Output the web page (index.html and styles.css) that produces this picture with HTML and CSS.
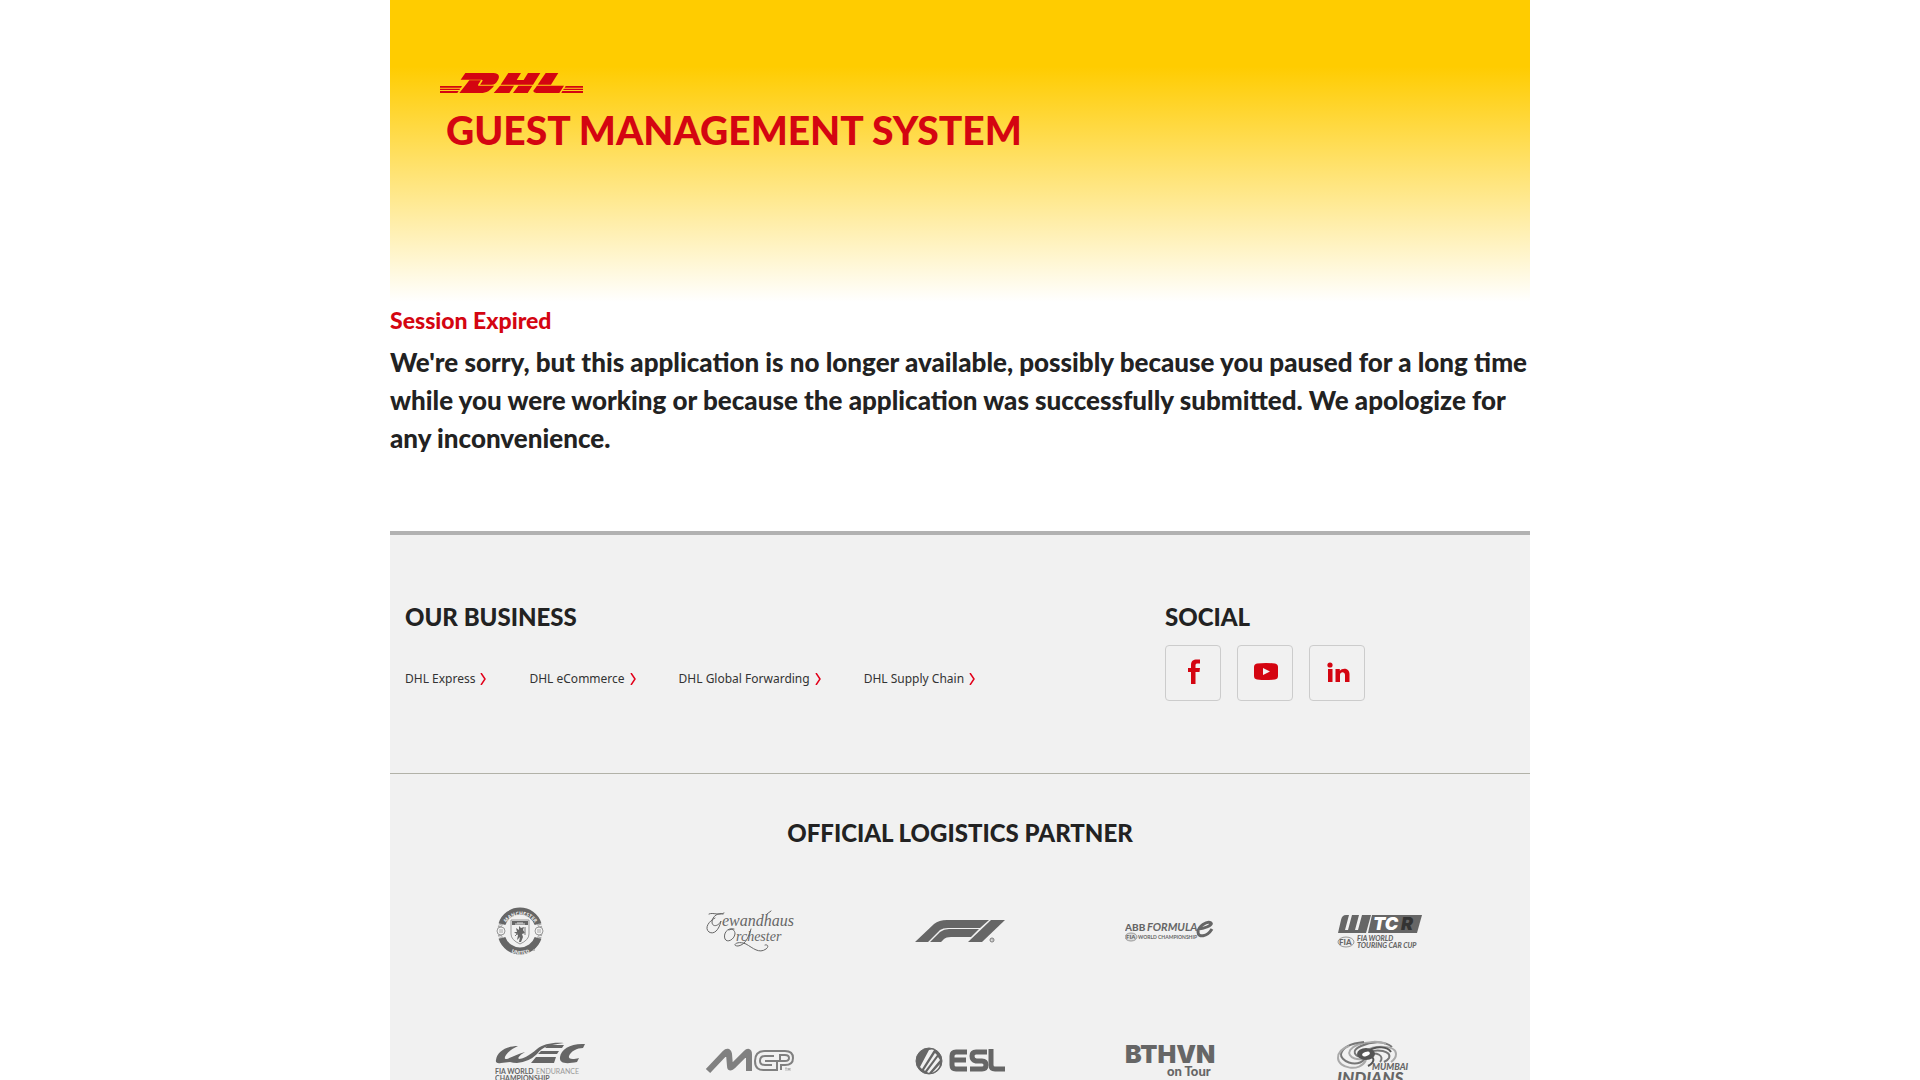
FILE: index.html
```html
<!DOCTYPE html>
<html lang="en">
<head>
  <meta charset="UTF-8">
  <meta name="viewport" content="width=device-width, initial-scale=1.0">
  <title>DHL Guest Management System</title>
  <link rel="stylesheet" href="styles.css">
</head>
<body>
  <div class="page">
    <header class="header">
      <a class="logo" href="#" aria-label="DHL">
        <svg viewBox="0 0 429 60" width="143" height="20" fill="#d40511">
          <path d="M76 0H160C178 0 181 12 172 24C167 32 164 35 155 35H122C119 35 121 33 124 29C128 23 130 20 125 20H62Z"/>
          <path d="M88 22H123L116 32C113 36 113 38 118 38H162C152 52 140 60 122 60H58Z"/>
          <path d="M205 0H243L230 21H251L264 0H301L279 35H182Z"/>
          <path d="M180 38H222L208 60H161ZM235 38H277L263 60H219Z"/>
          <path d="M317 0H355L333 35H293Z"/>
          <path d="M291 38H372L358 60H294C278 60 278 53 284 48Z"/>
          <path d="M0 39H66L63 44H0ZM0 47H61L58 51H0ZM0 54H56L52 60H0Z"/>
          <path d="M377 39H429V44H374ZM372 47H429V51H369ZM367 54H429V60H364Z"/>
        </svg>
      </a>
      <h1>GUEST MANAGEMENT SYSTEM</h1>
    </header>

    <main class="content">
      <h2>Session Expired</h2>
      <p>We're sorry, but this application is no longer available, possibly because you paused for a long time while you were working or because the application was successfully submitted. We apologize for any inconvenience.</p>
    </main>

    <footer class="footer">
      <div class="footer-top">
        <section class="business">
          <h3>OUR BUSINESS</h3>
          <nav class="links">
            <a href="#">DHL Express<svg viewBox="0 0 6 12" width="6" height="12"><path d="M1 0L5 6L1 12"/></svg></a>
            <a href="#">DHL eCommerce<svg viewBox="0 0 6 12" width="6" height="12"><path d="M1 0L5 6L1 12"/></svg></a>
            <a href="#">DHL Global Forwarding<svg viewBox="0 0 6 12" width="6" height="12"><path d="M1 0L5 6L1 12"/></svg></a>
            <a href="#">DHL Supply Chain<svg viewBox="0 0 6 12" width="6" height="12"><path d="M1 0L5 6L1 12"/></svg></a>
          </nav>
        </section>
        <section class="social">
          <h3>SOCIAL</h3>
          <div class="social-links">
            <a href="#" aria-label="Facebook">
              <svg viewBox="0 0 24 28" width="24" height="28"><path d="M9 26V14H6V10H9V7C9 3 11 1.500 15 1.500H18V5.500H16C14 5.500 13.500 6 13.500 7.500V10H18L17.500 14H13.500V26Z"/></svg>
            </a>
            <a href="#" aria-label="YouTube">
              <svg viewBox="0 0 24 28" width="24" height="28"><path fill-rule="evenodd" d="M3 5.500Q12 4.500 21 5.500Q24 6 24 9V18Q24 21 21 21.500Q12 22.500 3 21.500Q0 21 0 18V9Q0 6 3 5.500ZM9 10V17L16 13.500Z"/></svg>
            </a>
            <a href="#" aria-label="LinkedIn">
              <svg viewBox="0 0 24 28" width="24" height="28"><circle cx="4" cy="7" r="2.600"/><path d="M2 11H6.500V24H2ZM9.500 11H13.800V12.800C16 9.500 23.500 9.500 23.500 16V24H19V17C19 13.300 14 13.500 14 17V24H9.500Z"/></svg>
            </a>
          </div>
        </section>
      </div>

      <section class="partners">
        <h3>OFFICIAL LOGISTICS PARTNER</h3>
        <div class="partner-grid">
          <a href="#" aria-label="Manchester United">
            <svg viewBox="0 0 90 90">
              <defs>
                <path id="arcTop" d="M9 42A17 17 0 0 1 42 42"/>
                <path id="arcBottom" d="M5 48A20 20 0 0 0 46 48"/>
              </defs>
              <circle cx="25" cy="45" r="21" fill="none" stroke="#aaa" stroke-width="3" stroke-dasharray="2 1"/>
              <circle cx="25" cy="45" r="19" fill="#f1f1f1" stroke="#aaa" stroke-width="1"/>
              <path d="M7 38A19 19 0 0 1 43 38" fill="none" stroke="#666" stroke-width="7"/>
              <path d="M7 52A19 19 0 0 0 43 52" fill="none" stroke="#666" stroke-width="7"/>
              <circle cx="6" cy="45" r="4" fill="#f1f1f1" stroke="#999"/>
              <circle cx="44" cy="45" r="4" fill="#f1f1f1" stroke="#999"/>
              <path d="M5 43V47M7 43V47M43 43V47M45 43V47" stroke="#aaa"/>
              <path d="M16 34H34V48Q34 54 25 58Q16 54 16 48Z" fill="#f1f1f1" stroke="#999"/>
              <path d="M17 35H33V39H17Z"/>
              <path d="M20 38H30M23 38V36M25 38V36M27 38V36" fill="none" stroke="#ddd" stroke-width="1"/>
              <path d="M24 40L26 42L29 41L28 44L30 47L27 48L28 51L26 56H24L25 51L22 54L23 49L19 46L22 46L21 42L24 44Z"/>
              <path d="M30 41V49M20 50L23 47" stroke="#777"/>
              <text class="arc-text"><textPath href="#arcTop" startOffset="50%">MANCHESTER</textPath></text>
              <text class="arc-text"><textPath href="#arcBottom" startOffset="50%">UNITED</textPath></text>
              <circle cx="39" cy="64" r="1" fill="#aaa"/>
            </svg>
          </a>
          <a href="#" aria-label="Gewandhaus Orchester">
            <svg viewBox="0 0 90 90">
              <text class="script" x="17" y="40" font-size="16">ewandhaus</text>
              <text class="script" x="31" y="55" font-size="14">rchester</text>
              <g fill="none" stroke="#666" stroke-linecap="round">
                <path d="M18 28C14 26 7 30 7 36C7 41 13 41 16 35C14 44 9 49 4 46C-1 42 4 35 10 32M4 28C8 26 14 30 19 27"/>
                <path d="M29 43C22 41 18 48 20 53C22 57 29 54 30 48C30 44 27 42 24 44"/>
                <path d="M46 43C43 54 39 59 33 60C26 60 32 54 41 58C48 62 54 68 61 63C64 61 63 58 60 59"/>
                <path d="M62 28L66 25"/>
              </g>
            </svg>
          </a>
          <a href="#" aria-label="Formula 1">
            <svg viewBox="0 0 90 90">
              <path d="M0 56L19 38Q24 34 32 34H74L65 42H33Q28 42 25 44L13 56Z"/>
              <path d="M15 56L25 46Q29 43 34 43H64L56 51H36Q31 51 29 53L26 56Z"/>
              <path d="M53 56L76 34H90L67 56Z"/>
              <circle cx="77" cy="54" r="2" fill="none" stroke="#777" stroke-width="1"/>
              <path d="M76 55V53H78L77 54L78 55" fill="none" stroke="#999" stroke-width=".5"/>
            </svg>
          </a>
          <a href="#" aria-label="ABB Formula E">
            <svg viewBox="0 0 90 90">
              <text class="black" x="0" y="45" font-size="10">ABB</text>
              <text class="bold" x="22" y="45" font-size="11" font-style="italic">FORMULA</text>
              <path d="M73 43C79 43 88 39 86 37C82 34 73 41 73 46C73 52 82 51 87 43" fill="none" stroke="#666" stroke-width="3"/>
              <ellipse cx="6" cy="51" rx="6" ry="4" fill="#ddd" stroke="#999"/>
              <text class="black" x="1" y="53" font-size="6">FIA</text>
              <text class="bold" x="13" y="53" font-size="5">WORLD CHAMPIONSHIP</text>
            </svg>
          </a>
          <a href="#" aria-label="WTCR">
            <svg viewBox="0 0 90 90">
              <path d="M3 47L6 34Q7 29 11 29H14L10 44H13L17 29H24L20 44H23L27 29H36L31 47Z"/>
              <path d="M33 47L37 29H87L82 47Z"/>
              <text class="wide" x="38" y="44" font-size="18" fill="#fff">TC</text>
              <text class="wide" x="66" y="44" font-size="18" fill="#333">R</text>
              <ellipse cx="11" cy="56" rx="8" ry="5" fill="#eee" stroke="#999"/>
              <text class="black" x="4" y="59" font-size="8">FIA</text>
              <text class="black" x="22" y="55" font-size="7" font-style="italic">FIA WORLD</text>
              <text class="black" x="22" y="62" font-size="7" font-style="italic">TOURING CAR CUP</text>
            </svg>
          </a>
          <a href="#" aria-label="FIA World Endurance Championship">
            <svg viewBox="0 0 90 90">
              <path d="M23 30C12 30 2 35 1 44Q0 48 6 47L15 46Q18 47 22 47Q34 46 42 38C48 30 55 29 69 27C58 26 48 28 42 33C34 40 27 43 24 43C22 42 25 39 30 36C23 38 17 41 12 43C6 44 13 34 23 30Z"/>
              <path d="M53 29H69L67 32H50ZM46 35H64L62 38H43ZM41 41H61L59 47H36Z"/>
              <path d="M90 28C76 27 66 33 65 41C64 48 72 48 82 46L84 42C77 44 73 43 74 40C76 35 82 32 88 32Z"/>
              <text class="bold" x="0" y="58" font-size="7">FIA WORLD</text>
              <text class="bold light" x="41" y="58" font-size="7">ENDURANCE</text>
              <text class="bold" x="0" y="65" font-size="7">CHAMPIONSHIP</text>
            </svg>
          </a>
          <a href="#" aria-label="MGP">
            <svg class="outline" viewBox="0 0 90 90">
              <path d="M3 55L20 37Q23 34 24 38L25 50Q25 53 28 50L41 37Q44 34 44 38V55" stroke-width="6"/>
              <path d="M71 35H60Q50 35 50 45T60 54H72V45H60M69 40H60Q55 40 55 45Q55 49 60 49H67" stroke-width="2"/>
              <path d="M71 35H80Q88 35 88 42T80 49H76V54M72 45H80Q84 45 84 42T80 39H75V45" stroke-width="2"/>
              <path d="M80 52H82M81 52V55M83 55V52L84 54L85 52V55" stroke-width=".5"/>
            </svg>
          </a>
          <a href="#" aria-label="ESL">
            <svg viewBox="0 0 90 90">
              <circle cx="14" cy="45" r="13" stroke="#666"/>
              <path d="M5 51L14 34Q17 33 19 34L7 53ZM9 54L20 37L22 39L10 55ZM12 56L23 41L25 44L14 57ZM17 57L25 48Q24 54 17 57Z" fill="#f1f1f1"/>
              <g fill="none" stroke="#666" stroke-width="5" stroke-linejoin="round">
                <path d="M52 36H41Q37 36 37 40V49Q37 53 41 53H52M37 44H51"/>
                <path d="M72 36H61Q57 36 57 40T61 45H67Q71 45 71 49T67 53H55"/>
                <path d="M76 33V49Q76 53 80 53H90"/>
              </g>
            </svg>
          </a>
          <a href="#" aria-label="BTHVN on Tour">
            <svg viewBox="0 0 90 90">
              <text class="wide upright" x="0" y="47" font-size="25">BTHVN</text>
              <text class="black" x="42" y="60" font-size="13">on Tour</text>
            </svg>
          </a>
          <a href="#" aria-label="Mumbai Indians">
            <svg viewBox="0 0 90 90">
              <g fill="none" stroke="#777" stroke-width="2">
                <path d="M28 41C20 41 15 35 26 30C37 25 50 25 57 31"/>
                <path d="M28 43C15 45 8 35 22 29C33 25 45 25 51 28" stroke="#aaa"/>
                <path d="M30 43C20 53 5 44 6 38C8 30 19 27 29 26"/>
                <path d="M31 44C25 57 3 52 3 42C3 36 8 32 14 30" stroke="#aaa"/>
                <path d="M32 37C42 32 57 35 54 42C53 44 51 45 49 46"/>
                <path d="M32 39C42 35 50 40 45 46"/>
                <path d="M31 35C39 29 61 29 61 38C61 42 59 44 56 46" stroke="#aaa"/>
                <path d="M34 40C41 41 39 47 33 50M33 35C42 29 53 31 56 36" stroke="#555"/>
              </g>
              <ellipse cx="31" cy="38" rx="9" ry="6" fill="#555"/>
              <ellipse cx="31" cy="38" rx="4" ry="2" fill="#fff" transform="rotate(-20 31 38)"/>
              <text class="black" x="37" y="54" font-size="9" font-style="italic">MUMBAI</text>
              <text class="black" x="2" y="68" font-size="17" font-style="italic">INDIANS</text>
            </svg>
          </a>
        </div>
      </section>
    </footer>
  </div>
</body>
</html>
```
FILE: styles.css
```css
* {
  box-sizing: border-box;
}
body {
  margin: 0;
  font-family: "Noto Sans", "Open Sans", sans-serif;
  font-size: 12px;
  color: #222;
  background-color: #fff;
}
h1, h2, h3, p {
  margin: 0;
  font-family: Lato, "Noto Sans", sans-serif;
  font-weight: 900;
}
a {
  color: inherit;
  text-decoration: none;
}
svg {
  display: block;
}
.page {
  max-width: 1140px;
  margin: 0 auto;
}

/* header */
.header {
  padding: 73px 50px 147px;
  background: linear-gradient(180deg, #fc0 0, #fc0 22%, #fff 100%);
}
.logo {
  display: inline-block;
  vertical-align: top;
}
.header h1 {
  margin: 12px 0 0 6px;
  font-size: 39px;
  line-height: 50px;
  color: #d40511;
}

/* message */
.content {
  margin-bottom: 74px;
}
.content h2 {
  font-size: 23px;
  line-height: 36px;
  color: #d40511;
}
.content p {
  margin-top: 5px;
  font-size: 26px;
  line-height: 38px;
}

/* footer */
.footer {
  background-color: #f1f1f1;
  border-top: 4px solid #b2b2b2;
}
.footer h3 {
  font-size: 24px;
  line-height: 44px;
}
.footer-top {
  display: grid;
  grid-template-columns: 2fr 1fr;
  padding: 60px 0 72px;
  border-bottom: 1px solid #b2b2a8;
}
.business, .social {
  padding: 0 15px;
}
.links {
  display: flex;
  flex-wrap: wrap;
  gap: 12px 43px;
  margin-top: 30px;
}
.links a {
  display: flex;
  align-items: center;
  gap: 5px;
  line-height: 20px;
  color: #333;
}
.links path {
  fill: none;
  stroke: #e2001a;
  stroke-width: 1.5;
}
.social-links {
  display: flex;
  gap: 16px;
  margin-top: 6px;
}
.social-links a {
  display: flex;
  align-items: center;
  justify-content: center;
  width: 56px;
  height: 56px;
  padding: 0 0 2px 2px;
  border: 1px solid #ccc;
  border-radius: 4px;
}
.social-links svg {
  fill: #d40511;
}

/* partners */
.partners {
  padding: 37px 45px 48px;
}
.partners h3 {
  text-align: center;
}
.partner-grid {
  display: grid;
  grid-template-columns: repeat(5, 1fr);
  justify-items: center;
  row-gap: 40px;
  margin-top: 31px;
}
.partner-grid svg {
  width: 90px;
  height: 90px;
  fill: #666;
}
.partner-grid .outline {
  fill: none;
  stroke: #808080;
}
.partner-grid .black {
  font-family: Lato, sans-serif;
  font-weight: 900;
}
.partner-grid .bold {
  font-family: Lato, sans-serif;
  font-weight: 700;
}
.partner-grid .light {
  font-weight: 400;
  fill: #999;
}
.partner-grid .wide {
  font-family: Inter, sans-serif;
  font-weight: 900;
  font-style: italic;
}
.partner-grid .upright {
  font-style: normal;
}
.partner-grid .script {
  font-family: "Liberation Serif", serif;
  font-style: italic;
}
.partner-grid .arc-text {
  font-size: 5px;
  font-weight: 700;
  text-anchor: middle;
  fill: #eee;
}
```
